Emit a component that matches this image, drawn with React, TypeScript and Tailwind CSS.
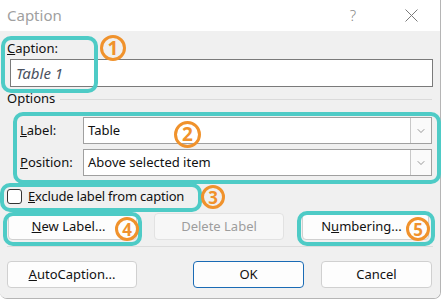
import { ChevronDown } from 'lucide-react';

const teal = 'border-[#4ecbc6]';

function Circled({ n, className }: { n: number; className: string }) {
  return (
    <div
      className={`absolute flex items-center justify-center rounded-full border-[3px] border-[#f0922c] text-[#f0922c] font-bold leading-none ${className}`}
    >
      {n}
    </div>
  );
}

function Select({ value }: { value: string }) {
  return (
    <div className="flex h-[27px] w-[349px] items-stretch border border-[#a0a0a0] bg-white">
      <div className="flex flex-1 items-center pl-[4px] text-[13px] text-[#111]">{value}</div>
      <div className="flex w-[21px] items-center justify-center border-l border-[#c8c8c8] bg-[#fafafa]">
        <ChevronDown className="h-[12px] w-[12px] text-[#555]" strokeWidth={1.2} />
      </div>
    </div>
  );
}

function Btn({
  children,
  w,
  disabled,
  primary,
}: {
  children: React.ReactNode;
  w: string;
  disabled?: boolean;
  primary?: boolean;
}) {
  return (
    <div
      className={`flex h-[27px] items-center justify-center rounded-[4px] text-[13px] ${w} ${
        primary
          ? 'border-[1.5px] border-[#1a6bb5] bg-[#fdfdfd] text-[#111]'
          : disabled
          ? 'border border-[#e2e2e2] bg-[#f7f7f7] text-[#9d9d9d]'
          : 'border border-[#d0d0d0] bg-[#fdfdfd] text-[#111]'
      }`}
    >
      {children}
    </div>
  );
}

export default function App() {
  return (
    <div className="relative h-[302px] w-[442px] overflow-hidden bg-white font-['Noto_Sans',sans-serif]">
      <div className="flex h-[299px] w-[441px] flex-col overflow-hidden rounded-b-[7px] border-r border-b border-[#b5b5b5]">
        {/* Title bar */}
        <div className="flex h-[31px] items-center bg-white pl-[7px]">
          <span className="text-[15px] text-[#a0a0a0]">Caption</span>
          <span className="ml-auto mr-[49px] text-[15px] font-light text-[#8a8a8a]">?</span>
          <svg width="13" height="13" viewBox="0 0 13 13" className="mr-[22px]">
            <path d="M0.5 0.5 L12.5 12.5 M12.5 0.5 L0.5 12.5" stroke="#7a7a7a" strokeWidth="1" />
          </svg>
        </div>

        {/* Body */}
        <div className="flex flex-1 flex-col bg-[#f0f0f0] px-[7px] pt-[9px]">
          <div className="h-[17px] text-[13px] leading-[17px] text-[#111]">
            <u>C</u>aption:
          </div>
          <div className="ml-[3px] mt-[2px] flex h-[28px] w-[423px] items-center border border-[#7a7a7a] bg-white pl-[5px] text-[15px] italic text-[#4b5260]">
            Table 1
          </div>

          <div className="mt-[4px] flex h-[16px] items-center gap-[5px]">
            <span className="text-[13px] text-[#111]">Options</span>
            <div className="h-px flex-1 bg-[#dadada] mr-[1px]" />
          </div>

          <div className="mt-[10px] flex items-center">
            <span className="ml-[13px] w-[63px] text-[13px] text-[#111]">
              <u>L</u>abel:
            </span>
            <Select value="Table" />
          </div>
          <div className="mt-[5px] flex items-center">
            <span className="ml-[13px] w-[63px] text-[13px] text-[#111]">
              <u>P</u>osition:
            </span>
            <Select value="Above selected item" />
          </div>

          <div className="mt-[13px] flex h-[15px] items-center gap-[6px]">
            <div className="h-[15px] w-[15px] rounded-[3px] border border-[#333] bg-white" />
            <span className="text-[13px] tracking-[-0.2px] text-[#111]">
              <u>E</u>xclude label from caption
            </span>
          </div>

          <div className="mt-[9px] flex items-center">
            <div className="ml-[1px]">
              <Btn w="w-[129px]">
                <span className="pr-[8px]">
                  <u>N</u>ew Label...
                </span>
              </Btn>
            </div>
            <div className="ml-[17px]">
              <Btn w="w-[130px]" disabled>
                Delete Label
              </Btn>
            </div>
            <div className="ml-[18px]">
              <Btn w="w-[127px]">
                <span className="pr-[8px]">
                  N<u>u</u>mbering...
                </span>
              </Btn>
            </div>
          </div>

          <div className="mt-[6px] h-px w-[426px] bg-[#dcdcdc]" />

          <div className="mt-[14px] flex items-center">
            <Btn w="w-[130px]">
              <span>
                <u>A</u>utoCaption...
              </span>
            </Btn>
            <div className="ml-[56px]">
              <Btn w="w-[111px]" primary>
                OK
              </Btn>
            </div>
            <div className="ml-[17px]">
              <Btn w="w-[111px]">Cancel</Btn>
            </div>
          </div>
        </div>
      </div>

      {/* Annotations */}
      <div className={`absolute left-[1px] top-[36px] h-[57px] w-[97px] rounded-[10px] border-[4px] ${teal}`} />
      <div className={`absolute left-[13px] top-[112px] h-[72px] w-[428px] rounded-[10px] border-[4px] ${teal}`} />
      <div className={`absolute left-[0px] top-[183px] h-[29px] w-[202px] rounded-[10px] border-[4px] ${teal}`} />
      <div className={`absolute left-[3px] top-[212px] h-[34px] w-[139px] rounded-[10px] border-[4px] ${teal}`} />
      <div className={`absolute left-[297px] top-[211px] h-[35px] w-[138px] rounded-[10px] border-[4px] ${teal}`} />

      <Circled n={1} className="left-[100px] top-[35px] h-[26px] w-[26px] text-[19px]" />
      <Circled n={2} className="left-[174px] top-[121px] h-[27px] w-[27px] text-[19px]" />
      <Circled n={3} className="left-[201px] top-[185px] h-[24px] w-[24px] text-[17px]" />
      <Circled n={4} className="left-[115px] top-[217px] h-[24px] w-[24px] text-[17px]" />
      <Circled n={5} className="left-[406px] top-[217px] h-[24px] w-[24px] text-[17px]" />
    </div>
  );
}
